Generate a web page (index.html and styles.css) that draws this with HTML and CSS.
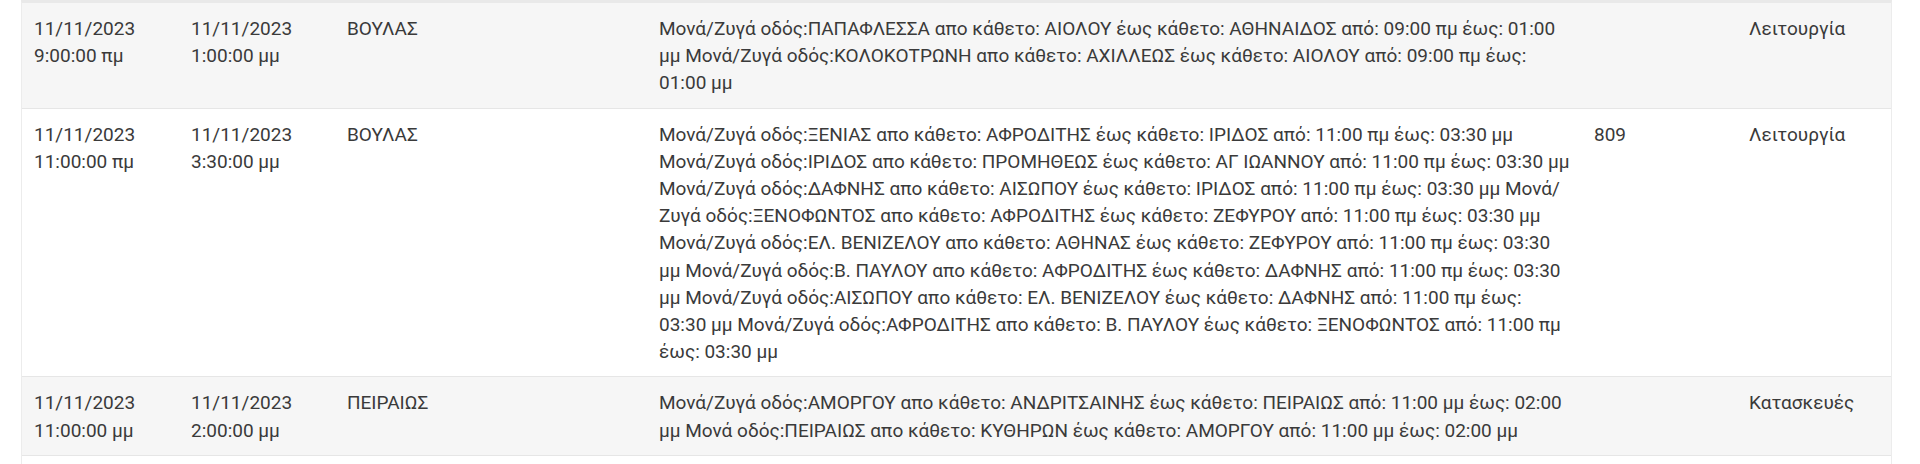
FILE: index.html
```html
<!DOCTYPE html>
<html lang="el">
<head>
<meta charset="utf-8">
<title>Έργα</title>
<link rel="stylesheet" href="styles.css">
</head>
<body>
<div class="card">
  <table class="works">
    <colgroup>
      <col class="c-from">
      <col class="c-to">
      <col class="c-area">
      <col class="c-desc">
      <col class="c-num">
      <col class="c-type">
    </colgroup>
    <tbody>
      <tr class="odd">
        <td>11/11/2023<br>9:00:00 πμ</td>
        <td>11/11/2023<br>1:00:00 μμ</td>
        <td>ΒΟΥΛΑΣ</td>
        <td>Μονά/Ζυγά οδός:ΠΑΠΑΦΛΕΣΣΑ απο κάθετο: ΑΙΟΛΟΥ έως κάθετο: ΑΘΗΝΑΙΔΟΣ από: 09:00 πμ έως: 01:00 μμ Μονά/Ζυγά οδός:ΚΟΛΟΚΟΤΡΩΝΗ απο κάθετο: ΑΧΙΛΛΕΩΣ έως κάθετο: ΑΙΟΛΟΥ από: 09:00 πμ έως: 01:00 μμ</td>
        <td></td>
        <td>Λειτουργία</td>
      </tr>
      <tr>
        <td>11/11/2023<br>11:00:00 πμ</td>
        <td>11/11/2023<br>3:30:00 μμ</td>
        <td>ΒΟΥΛΑΣ</td>
        <td>Μονά/Ζυγά οδός:ΞΕΝΙΑΣ απο κάθετο: ΑΦΡΟΔΙΤΗΣ έως κάθετο: ΙΡΙΔΟΣ από: 11:00 πμ έως: 03:30 μμ Μονά/Ζυγά οδός:ΙΡΙΔΟΣ απο κάθετο: ΠΡΟΜΗΘΕΩΣ έως κάθετο: ΑΓ ΙΩΑΝΝΟΥ από: 11:00 πμ έως: 03:30 μμ Μονά/Ζυγά οδός:ΔΑΦΝΗΣ απο κάθετο: ΑΙΣΩΠΟΥ έως κάθετο: ΙΡΙΔΟΣ από: 11:00 πμ έως: 03:30 μμ Μονά/Ζυγά οδός:ΞΕΝΟΦΩΝΤΟΣ απο κάθετο: ΑΦΡΟΔΙΤΗΣ έως κάθετο: ΖΕΦΥΡΟΥ από: 11:00 πμ έως: 03:30 μμ Μονά/Ζυγά οδός:ΕΛ. ΒΕΝΙΖΕΛΟΥ απο κάθετο: ΑΘΗΝΑΣ έως κάθετο: ΖΕΦΥΡΟΥ από: 11:00 πμ έως: 03:30 μμ Μονά/Ζυγά οδός:Β. ΠΑΥΛΟΥ απο κάθετο: ΑΦΡΟΔΙΤΗΣ έως κάθετο: ΔΑΦΝΗΣ από: 11:00 πμ έως: 03:30 μμ Μονά/Ζυγά οδός:ΑΙΣΩΠΟΥ απο κάθετο: ΕΛ. ΒΕΝΙΖΕΛΟΥ έως κάθετο: ΔΑΦΝΗΣ από: 11:00 πμ έως: 03:30 μμ Μονά/Ζυγά οδός:ΑΦΡΟΔΙΤΗΣ απο κάθετο: Β. ΠΑΥΛΟΥ έως κάθετο: ΞΕΝΟΦΩΝΤΟΣ από: 11:00 πμ έως: 03:30 μμ</td>
        <td>809</td>
        <td>Λειτουργία</td>
      </tr>
      <tr class="odd">
        <td>11/11/2023<br>11:00:00 μμ</td>
        <td>11/11/2023<br>2:00:00 μμ</td>
        <td>ΠΕΙΡΑΙΩΣ</td>
        <td>Μονά/Ζυγά οδός:ΑΜΟΡΓΟΥ απο κάθετο: ΑΝΔΡΙΤΣΑΙΝΗΣ έως κάθετο: ΠΕΙΡΑΙΩΣ από: 11:00 μμ έως: 02:00 μμ Μονά οδός:ΠΕΙΡΑΙΩΣ απο κάθετο: ΚΥΘΗΡΩΝ έως κάθετο: ΑΜΟΡΓΟΥ από: 11:00 μμ έως: 02:00 μμ</td>
        <td></td>
        <td>Κατασκευές</td>
      </tr>
      <tr class="filler">
        <td colspan="6"></td>
      </tr>
    </tbody>
  </table>
</div>
</body>
</html>
```

FILE: styles.css
```css
html, body {
  margin: 0;
  padding: 0;
  background: #ffffff;
  overflow: hidden;
}

body {
  font-family: Roboto, "Noto Sans", "Liberation Sans", sans-serif;
  font-size: 19px;
  line-height: 27.2px;
  color: #3a3a3a;
}

.card {
  margin: 0 28px 0 21px;
  border-left: 1px solid #ececec;
  border-right: 1px solid #ececec;
  border-top: 3px solid #e9e9e9;
  min-height: 600px;
}

.works {
  width: 100%;
  border-collapse: collapse;
  table-layout: fixed;
}

.c-from { width: 157px; }
.c-to { width: 156px; }
.c-area { width: 312px; }
.c-desc { width: 935px; }
.c-num { width: 155px; }
.c-type { width: auto; }

.works td {
  vertical-align: top;
  padding: 12px 12px 11px 12px;
  border-bottom: 1px solid #e6e6e6;
  text-align: left;
}

.works tr.odd td {
  background: #f6f6f6;
}

.works tr.filler td {
  height: 120px;
  border-bottom: none;
}
```
